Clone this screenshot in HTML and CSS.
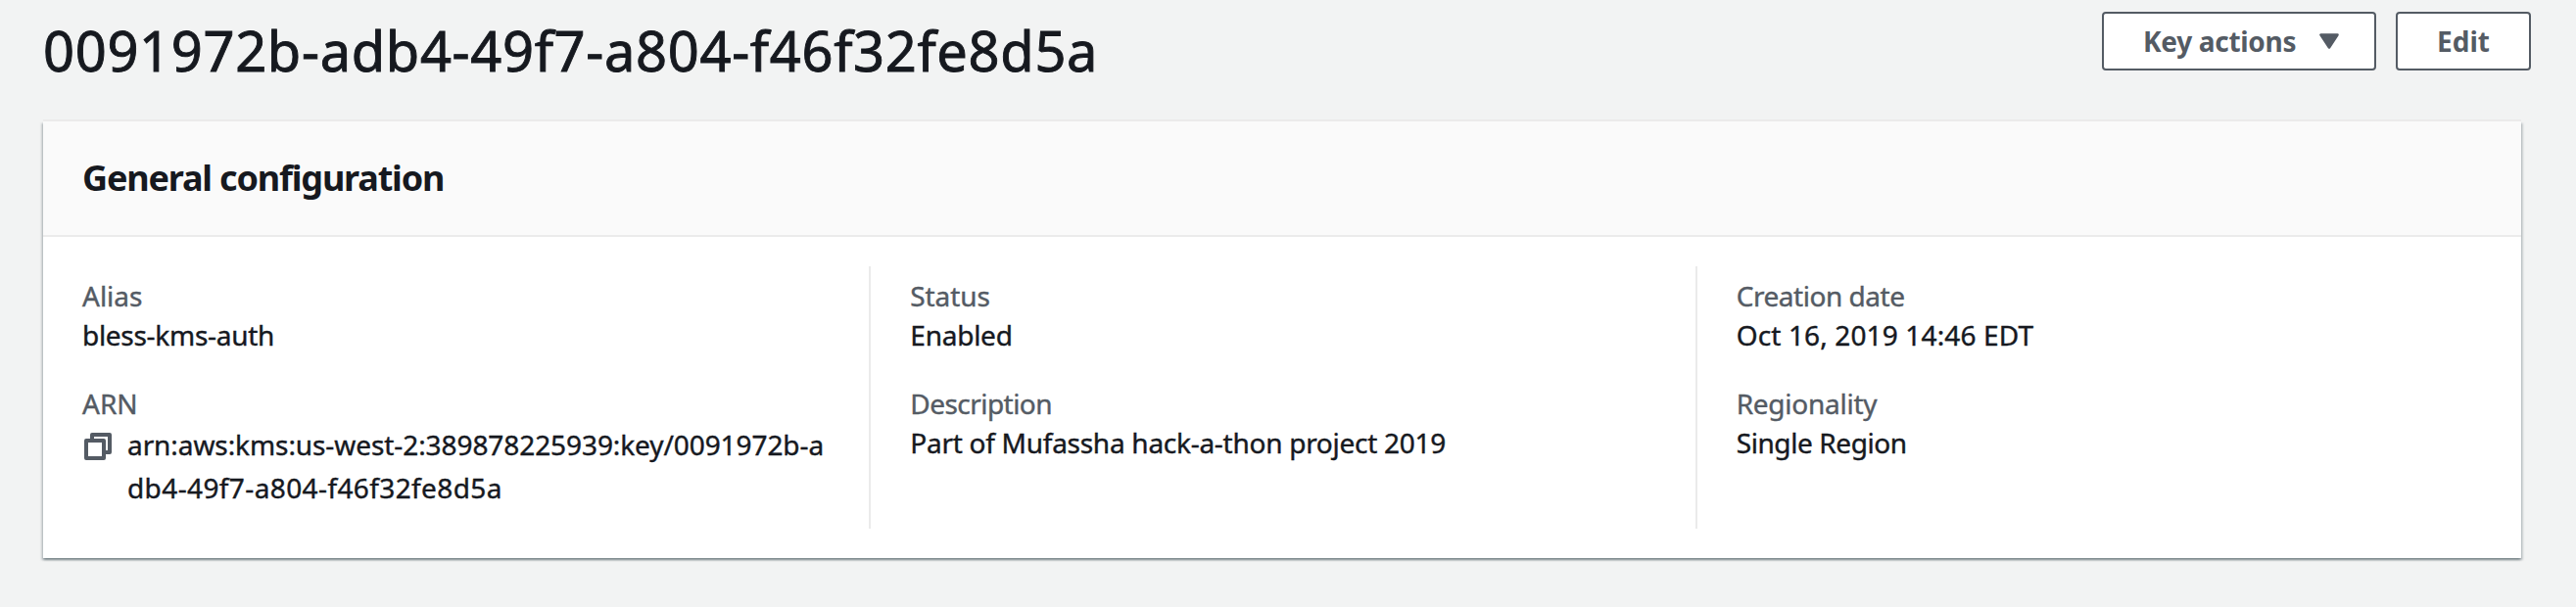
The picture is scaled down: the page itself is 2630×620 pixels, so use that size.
FILE: index.html
```html
<!DOCTYPE html>
<html lang="en">
<head>
<meta charset="utf-8">
<title>Key details</title>
<link rel="stylesheet" href="styles.css">
</head>
<body>
<header class="page-header">
  <h1 class="page-title">0091972b-adb4-49f7-a804-f46f32fe8d5a</h1>
  <div class="actions">
    <button class="button button-menu"><span>Key actions</span><svg class="caret" viewBox="0 0 20 16"><path d="M1.5 1.5h17L10 14.5z" fill="currentColor" stroke="currentColor" stroke-width="2.6" stroke-linejoin="round"/></svg></button>
    <button class="button button-edit">Edit</button>
  </div>
</header>
<section class="card">
  <div class="card-header"><h2 class="card-title">General configuration</h2></div>
  <div class="columns">
    <dl class="column">
      <div class="field"><dt>Alias</dt><dd class="alias-value">bless-kms-auth</dd></div>
      <div class="field"><dt>ARN</dt><dd class="arn"><svg class="copy" viewBox="0 0 28 28" fill="none" stroke="currentColor" stroke-width="4" stroke-linejoin="round"><path d="M8 6V2h18v18h-4"/><path d="M2 8h18v18H2z"/></svg><span class="arn-text"><span class="arn-start">arn:aws:kms:us-west-2:389878225939:key/0091972b-a</span><br><span class="arn-end">db4-49f7-a804-f46f32fe8d5a</span></span></dd></div>
    </dl>
    <dl class="column">
      <div class="field"><dt class="status-label">Status</dt><dd class="status-value">Enabled</dd></div>
      <div class="field"><dt class="description-label">Description</dt><dd class="description-value">Part of Mufassha hack-a-thon project 2019</dd></div>
    </dl>
    <dl class="column">
      <div class="field"><dt class="date-label">Creation date</dt><dd class="date-value">Oct 16, 2019 14:46 EDT</dd></div>
      <div class="field"><dt class="region-label">Regionality</dt><dd class="region-value">Single Region</dd></div>
    </dl>
  </div>
</section>
</body>
</html>
```
FILE: styles.css
```css
* { box-sizing: border-box; }
body {
  margin: 0;
  padding: 12px 46px 0 44px;
  height: 620px;
  background: #f2f3f3;
  color: #16191f;
  font-family: "Noto Sans", "Open Sans", sans-serif;
  font-size: 28px;
  line-height: 40px;
  white-space: nowrap;
  overflow: hidden;
}
h1, h2, dl, dd { margin: 0; font-weight: 400; }
.page-header { display: flex; justify-content: space-between; align-items: flex-start; height: 112px; }
.page-title { padding-top: 1px; font-size: 56px; line-height: 76px; letter-spacing: .66px; -webkit-text-stroke: .9px; }
.actions { display: flex; gap: 20px; }
.button {
  display: flex; align-items: center; height: 60px; padding: 0 0 1px 40px;
  border: 2px solid #545b64; border-radius: 4px; background: #fff; color: #545b64;
  font: 700 28px/40px "Noto Sans", sans-serif;
}
.button-menu { width: 280px; justify-content: space-between; padding-right: 36px; letter-spacing: -.3px; }
.button-edit { width: 138px; }
.caret { width: 20px; height: 16px; }
.card {
  width: 2530px; height: 446px; background: #fff;
  box-shadow: 0 -2px 0 #ebebeb, 0 2px 2px rgba(0,28,36,.3), 2px 2px 2px rgba(0,28,36,.15), -2px 2px 2px rgba(0,28,36,.15);
}
.card-header { height: 118px; padding: 34px 40px; background: #fafafa; border-bottom: 2px solid #ebebeb; }
.card-title { font-size: 36px; line-height: 48px; font-weight: 700; letter-spacing: -1.18px; }
.columns { display: grid; grid-template-columns: repeat(3, 1fr); padding: 30px 0; }
.column { height: 268px; padding: 10px 0 0 40px; -webkit-text-stroke: .4px; }
.column + .column { border-left: 2px solid #ebebeb; }
.field + .field { margin-top: 30px; }
dt { color: #545b64; }
.alias-value { letter-spacing: -.29px; }
.arn { display: flex; line-height: 44px; }
.arn-start { letter-spacing: -.08px; }
.arn-end { letter-spacing: .39px; }
.copy { width: 28px; height: 28px; margin: 10px 16px 0 2px; color: #545b64; }
.status-label { letter-spacing: -.1px; }
.status-value { letter-spacing: -.25px; }
.description-label { letter-spacing: -.55px; }
.description-value { letter-spacing: -.27px; }
.date-label { letter-spacing: -.46px; }
.date-value { letter-spacing: .14px; }
.region-label { letter-spacing: -.25px; }
.region-value { letter-spacing: -.4px; }
```
